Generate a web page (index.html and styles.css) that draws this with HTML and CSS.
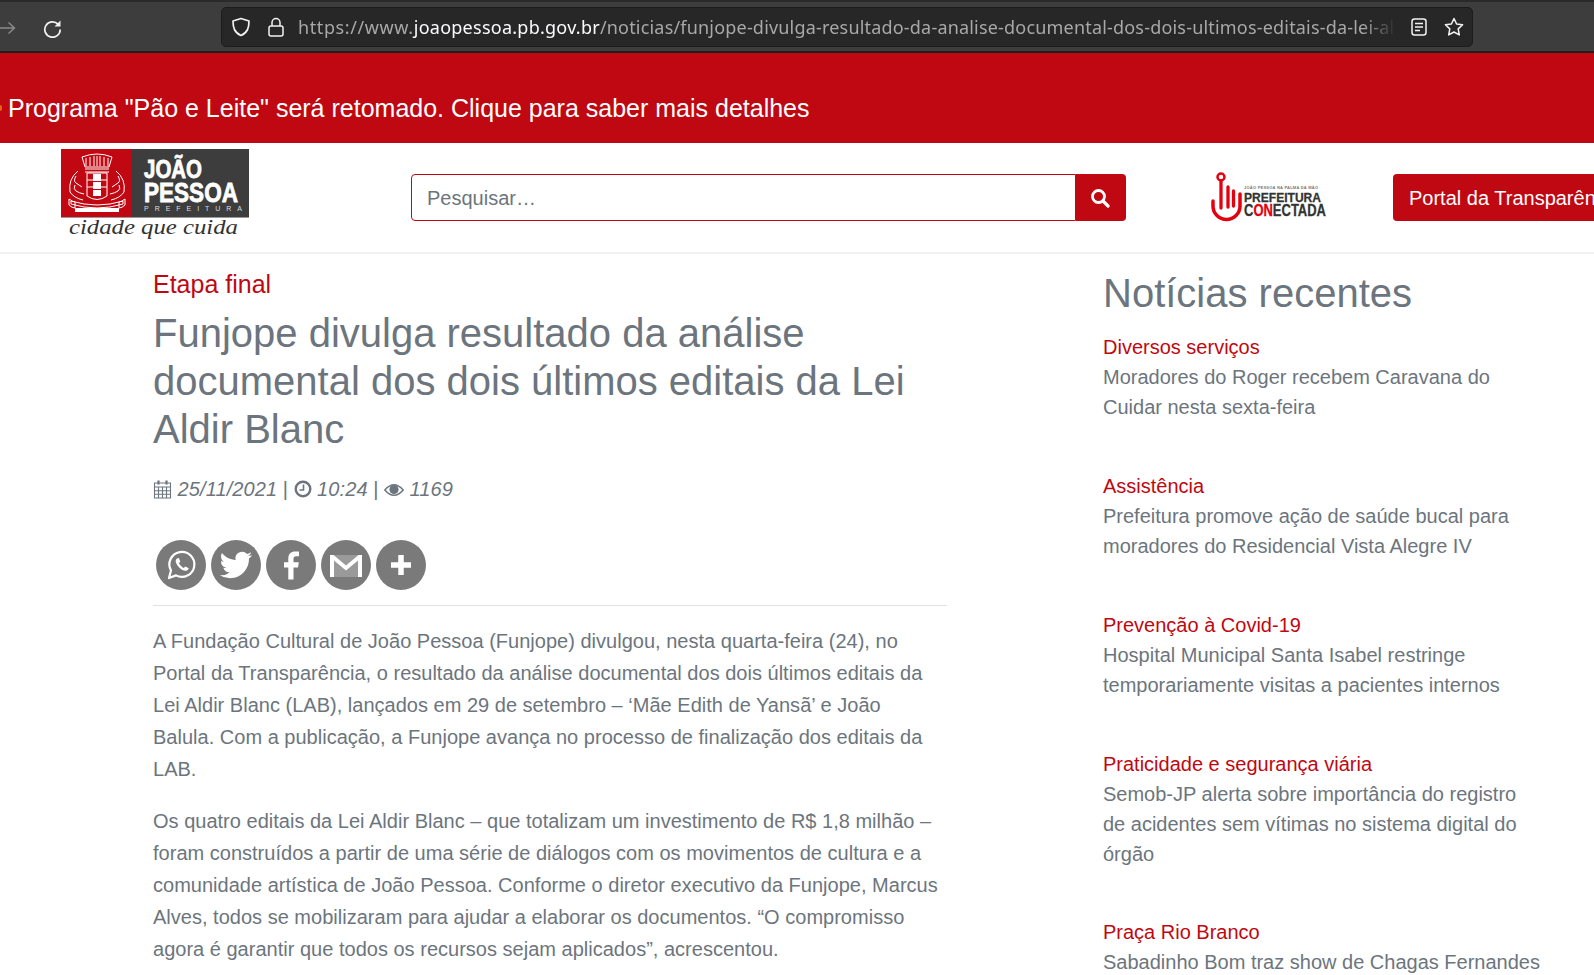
FILE: index.html
```html
<!DOCTYPE html>
<html lang="pt-BR">
<head>
<meta charset="utf-8">
<title>Funjope divulga resultado</title>
<link rel="stylesheet" href="styles.css">
</head>
<body>
<div class="toolbar">
  <svg class="tb-forward" width="16" height="16" viewBox="0 0 16 16"><path d="M-2 8h16M8.500 2.500 14.500 8l-6 5.500" fill="none" stroke="#8a8a8a" stroke-width="1.400"/></svg>
  <svg class="tb-reload" width="20" height="20" viewBox="0 0 20 20"><path d="M18.200 11.500a7.700 7.700 0 1 1-2.200-5.400" fill="none" stroke="#f2f2f2" stroke-width="1.700"/><path d="M18.500 2.500v6h-6z" fill="#f2f2f2"/></svg>
  <div class="urlbar">
    <svg class="ub-shield" width="20" height="20" viewBox="0 0 20 20"><path d="M10 1.500 18 4c0 7-1.500 11.500-8 14.500C3.500 15.500 2 11 2 4z" fill="none" stroke="#f2f2f2" stroke-width="1.700" stroke-linejoin="round"/></svg>
    <svg class="ub-lock" width="16" height="20" viewBox="0 0 16 20"><rect x="1" y="9" width="14" height="10" rx="2" fill="none" stroke="#f2f2f2" stroke-width="1.500"/><path d="M4 9V5.500a4 4 0 0 1 8 0V9" fill="none" stroke="#f2f2f2" stroke-width="1.500"/></svg>
    <div class="url"><span class="dim scheme">https://www.</span><span class="host">joaopessoa.pb.gov.br</span><span class="dim path">/noticias/funjope-divulga-resultado-da-analise-documental-dos-dois-ultimos-editais-da-lei-aldir-blanc</span></div>
    <svg class="ub-reader" width="16" height="18" viewBox="0 0 16 18"><rect x="1" y="1" width="14" height="16" rx="2.500" fill="none" stroke="#f2f2f2" stroke-width="1.500"/><path d="M4 5.500h8M4 9h8M4 12.500h5" stroke="#f2f2f2" stroke-width="1.500"/></svg>
    <svg class="ub-star" width="20" height="20" viewBox="0 0 20 20"><path d="m10 1.500 2.600 5.500 6 .8-4.400 4.100 1.100 6L10 15l-5.300 2.900 1.100-6L1.400 7.800l6-.8z" fill="none" stroke="#f2f2f2" stroke-width="1.500" stroke-linejoin="round"/></svg>
  </div>
</div>

<div class="alert"><i class="alert-dot"></i><span class="alert-text">Programa "Pão e Leite" será retomado. Clique para saber mais detalhes</span></div>

<header class="site-header">
  <svg class="logo" width="188" height="96" viewBox="0 0 188 96">
    <rect width="71" height="68" fill="#c10812"/>
    <rect x="71" width="117" height="68" fill="#3d3d3d"/>
    <rect y="68" width="188" height="1" fill="#999"/>
    <g fill="none" stroke="#fff" stroke-width="1">
      <path d="M21 8q15-6 30 0l-3 10H24z"/>
      <path d="M25 9v8M29 8v9M33 7v10M36 7v10M39 7v10M43 8v9M47 9v8"/>
      <path d="M24 20h24M24 23h24"/>
      <path d="M26 24h20v23q-10 7-20 0z"/>
      <path d="M26 31h6M26 38h6M40 31h6M40 38h6"/>
      <path d="M17 22q-10 8-8 21 4 6 13 8M55 22q10 8 8 21-4 6-13 8"/>
      <path d="M15 27q-3 5 0 7t6 4M14 36q-2 4 1 6t8 3M57 27q3 5 0 7t-6 4M58 36q2 4-1 6t-8 3"/>
      <path d="M8 50q4 3 6 3v6q-3 0-6-3zM64 50q-4 3-6 3v6q3 0 6-3z"/>
      <path d="M10 52q26 8 52 0v3q-26 8-52 0z"/>
    </g>
    <g fill="#fff">
      <rect x="32" y="25" width="8" height="7"/>
      <rect x="32" y="33" width="8" height="7"/>
      <rect x="32" y="41" width="8" height="6"/>
      <rect x="14" y="59" width="44" height="4"/>
    </g>
    <text class="logo-joao" x="83" y="29" textLength="58" lengthAdjust="spacingAndGlyphs">JOÃO</text>
    <text class="logo-pessoa" x="83" y="53" textLength="94" lengthAdjust="spacingAndGlyphs">PESSOA</text>
    <text class="logo-pref" x="83" y="62" textLength="98">PREFEITURA</text>
    <text class="logo-motto" x="8" y="85" textLength="169" lengthAdjust="spacingAndGlyphs">cidade que cuida</text>
  </svg>
  <form class="search">
    <div class="search-input">Pesquisar…</div>
    <div class="search-btn"><svg width="20" height="20" viewBox="0 0 20 20"><circle cx="8.500" cy="8.500" r="6" fill="none" stroke="#fff" stroke-width="2.800"/><path d="m13 13 5 5" stroke="#fff" stroke-width="3.200" stroke-linecap="round"/></svg></div>
  </form>
  <svg class="conectada" width="118" height="52" viewBox="0 0 118 52">
    <g fill="none" stroke="#e3000f" stroke-linecap="round">
      <circle cx="11" cy="5" r="3.500" stroke-width="2.500"/>
      <path d="M11 9v27M18 15v20M23.500 19v15" stroke-width="3.300"/>
      <path d="M3 29v5a13.500 13.500 0 0 0 27 0V22" stroke-width="3.500"/>
    </g>
    <text class="c-small" x="34" y="17" textLength="74">JOÃO PESSOA NA PALMA DA MÃO</text>
    <text class="c-pref" x="34" y="30" textLength="77" lengthAdjust="spacingAndGlyphs">PREFEITURA</text>
    <text class="c-con" x="34" y="44" textLength="82" lengthAdjust="spacingAndGlyphs"><tspan class="c-dark">C</tspan><tspan class="c-red">ON</tspan><tspan class="c-dark">ECTADA</tspan></text>
  </svg>
  <a class="portal">Portal da Transparência</a>
</header>

<main class="layout">
  <article class="article">
    <div class="kicker">Etapa final</div>
    <h1 class="headline">Funjope divulga resultado da análise documental dos dois últimos editais da Lei Aldir Blanc</h1>
    <div class="meta"><svg class="ico-cal" width="19" height="20" viewBox="0 0 18 20"><path d="M1 4h16v15H1zM1 8h16M1 11.700h16M1 15.300h16M5 8v11M9 8v11M13 8v11" fill="none" stroke="#6c757d" stroke-width="1.100"/><path d="M5 1.500v4M13 1.500v4" stroke="#6c757d" stroke-width="2.200"/></svg> <em>25/11/2021</em> | <svg class="ico-clock" width="18" height="18" viewBox="0 0 18 18"><circle cx="9" cy="9" r="7.300" fill="none" stroke="#6c757d" stroke-width="2.400"/><path d="M9.500 4.500V10H5.500" fill="none" stroke="#6c757d" stroke-width="1.600"/></svg> <em>10:24</em> | <svg class="ico-eye" width="20" height="14" viewBox="0 0 20 14"><path d="M.8 7Q10-3.500 19.200 7 10 17.500.8 7z" fill="none" stroke="#6c757d" stroke-width="1.500"/><circle cx="10" cy="6.500" r="4.600" fill="#6c757d"/></svg> <em>1169</em></div>
    <div class="share">
      <span class="share-btn"><svg width="50" height="50" viewBox="0 0 50 50"><path d="M13 38l2-7.500a12.500 12.500 0 1 1 5 4.900z" fill="none" stroke="#fff" stroke-width="2.200" stroke-linejoin="round"/><path d="M21 18.500c-2 1.500-1.700 4 .5 7s5 5 7.500 5.300c2 .2 3.500-1 3.700-2.600l-3.400-1.800-1.500 1.500c-1.700-.6-4-2.800-4.800-4.700l1.300-1.600-1.500-3.500z" fill="#fff"/></svg></span>
      <span class="share-btn"><svg width="50" height="50" viewBox="0 0 24 24"><path transform="translate(4.200 4.200) scale(.65)" d="M23.950 4.570a10 10 0 0 1-2.820.77 4.960 4.960 0 0 0 2.160-2.720c-.95.550-2 .96-3.130 1.190a4.920 4.920 0 0 0-8.380 4.480C7.690 8.100 4.070 6.130 1.640 3.160A4.820 4.820 0 0 0 .96 5.640c0 1.700.87 3.210 2.190 4.100a4.900 4.900 0 0 1-2.230-.62v.06a4.920 4.920 0 0 0 3.950 4.830 5 5 0 0 1-2.210.08 4.940 4.940 0 0 0 4.600 3.420A9.870 9.870 0 0 1 0 19.540a14 14 0 0 0 7.560 2.210c9.050 0 14-7.500 14-13.980 0-.21 0-.42-.02-.63a9.940 9.940 0 0 0 2.410-2.570z" fill="#fff"/></svg></span>
      <span class="share-btn"><svg width="50" height="50" viewBox="0 0 50 50"><path d="M27.500 39.500V27.500h4.500l.8-5.200h-5.300V19c0-1.600.6-2.700 2.800-2.700h2.700v-4.700c-.6-.1-2-.2-3.900-.2-4.100 0-6.800 2.400-6.800 7v3.900H18v5.200h4.300v12z" fill="#fff"/></svg></span>
      <span class="share-btn"><svg width="50" height="50" viewBox="0 0 50 50"><rect x="9" y="15" width="32" height="22" fill="#9a9a9a"/><path d="M9 15h3.500L25 25.500 37.500 15H41v22h-4V20.500L25 30.500 13 20.500V37H9z" fill="#fff"/></svg></span>
      <span class="share-btn"><svg width="50" height="50" viewBox="0 0 50 50"><path d="M25 15v20M15 25h20" stroke="#fff" stroke-width="5.500"/></svg></span>
    </div>
    <hr class="rule">
    <p>A Fundação Cultural de João Pessoa (Funjope) divulgou, nesta quarta-feira (24), no Portal da Transparência, o resultado da análise documental dos dois últimos editais da Lei Aldir Blanc (LAB), lançados em 29 de setembro – ‘Mãe Edith de Yansã’ e João Balula. Com a publicação, a Funjope avança no processo de finalização dos editais da LAB.</p>
    <p>Os quatro editais da Lei Aldir Blanc – que totalizam um investimento de R$ 1,8 milhão – foram construídos a partir de uma série de diálogos com os movimentos de cultura e a comunidade artística de João Pessoa. Conforme o diretor executivo da Funjope, Marcus Alves, todos se mobilizaram para ajudar a elaborar os documentos. “O compromisso agora é garantir que todos os recursos sejam aplicados”, acrescentou.</p>
  </article>
  <aside class="sidebar">
    <h2 class="side-title">Notícias recentes</h2>
    <div class="news"><a class="news-cat">Diversos serviços</a><div>Moradores do Roger recebem Caravana do Cuidar nesta sexta-feira</div></div>
    <div class="news"><a class="news-cat">Assistência</a><div>Prefeitura promove ação de saúde bucal para moradores do Residencial Vista Alegre IV</div></div>
    <div class="news"><a class="news-cat">Prevenção à Covid-19</a><div>Hospital Municipal Santa Isabel restringe temporariamente visitas a pacientes internos</div></div>
    <div class="news"><a class="news-cat">Praticidade e segurança viária</a><div>Semob-JP alerta sobre importância do registro de acidentes sem vítimas no sistema digital do órgão</div></div>
    <div class="news news-last"><a class="news-cat">Praça Rio Branco</a><div>Sabadinho Bom traz show de Chagas Fernandes</div></div>
  </aside>
</main>
</body>
</html>
```
FILE: styles.css
```css
* { box-sizing: border-box; }
html, body { margin: 0; height: 975px; overflow: hidden; }
body { font-family: "Liberation Sans", Arial, sans-serif; color: #6c757d; font-size: 20px; background: #fff; }

.toolbar { height: 53px; background: #3d3d3d; border-top: 2px solid #2a2a2a; border-bottom: 2px solid #1f1f1f; display: flex; align-items: center; }
.tb-forward { margin-top: 2px; }
.tb-reload { margin: 2px 0 0 26px; }
.urlbar { margin-left: 159px; width: 1252px; height: 40px; background: #272727; border: 1px solid #1c1c1c; border-radius: 5px; display: flex; align-items: center; padding-left: 9px; }
.ub-lock { margin-left: 17px; }
.url { margin-left: 14px; width: 1098px; overflow: hidden; white-space: nowrap; font-family: "Noto Sans", sans-serif; font-size: 18px; -webkit-mask-image: linear-gradient(to right, #000 97%, transparent); mask-image: linear-gradient(to right, #000 97%, transparent); }
.dim { color: #a8a8a8; }
.scheme { letter-spacing: .6px; }
.host { color: #fbfbfe; letter-spacing: .25px; }
.path { letter-spacing: .19px; }
.ub-reader { margin-left: 15px; }
.ub-star { margin-left: 17px; }

.alert { height: 90px; background: #bf0811; color: #fff; font-size: 25px; padding-top: 19px; line-height: 28px; white-space: nowrap; display: flex; align-items: center; }
.alert-dot { width: 2px; height: 6px; background: #e8641b; margin-right: 6px; border-radius: 0 3px 3px 0; flex: none; }

.site-header { height: 111px; border-bottom: 2px solid #f1f1f1; display: flex; align-items: flex-start; padding: 6px 0 0 61px; white-space: nowrap; }
.logo { flex: none; overflow: visible; }
.logo-joao { font: 700 25px "Liberation Sans", sans-serif; fill: #fff; stroke: #fff; stroke-width: .8px; }
.logo-pessoa { font: 700 27px "Liberation Sans", sans-serif; fill: #fff; stroke: #fff; stroke-width: .8px; }
.logo-pref { font: 400 7px "Liberation Sans", sans-serif; fill: #ddd; }
.logo-motto { font: italic 400 22px "Liberation Serif", serif; fill: #333; }

.search { display: flex; flex: none; width: 715px; height: 47px; margin: 25px 0 0 162px; }
.search-input { flex: 1; border: 1px solid #bf0811; border-radius: 4px 0 0 4px; padding: 0 15px; line-height: 47px; color: #6c757d; }
.search-btn { width: 50px; background: #bf0811; border-radius: 0 4px 4px 0; display: flex; align-items: center; justify-content: center; padding-right: 2px; }

.conectada { flex: none; margin: 23px 0 0 84px; overflow: visible; }
.c-small { font: 700 4px "Liberation Sans", sans-serif; fill: #777; }
.c-pref { font: 700 13px "Liberation Sans", sans-serif; fill: #333; stroke: #333; stroke-width: .3px; }
.c-con { font: 700 16.500px "Liberation Sans", sans-serif; stroke-width: .3px; }
.c-dark { fill: #333; stroke: #333; }
.c-red { fill: #e3000f; stroke: #e3000f; }

.portal { flex: none; margin: 25px 0 0 65px; height: 47px; line-height: 49px; background: #bf0811; color: #fff; border-radius: 4px; padding: 0 16px; }

.layout { display: flex; padding-left: 153px; }
.article { width: 794px; flex: none; }
.kicker { color: #bf0811; font-size: 25px; line-height: 30px; margin-top: 15px; }
.headline { font-size: 40px; font-weight: 400; line-height: 48px; margin: 10px 0 0; }
.meta { margin-top: 21px; line-height: 30px; height: 30px; white-space: nowrap; }
.meta em { letter-spacing: .1px; }
.meta svg { vertical-align: -2px; }
.meta .ico-cal { vertical-align: -3px; }
.meta .ico-eye { vertical-align: -1px; }
.share { display: flex; gap: 5px; margin: 36px 0 0 3px; }
.share-btn { width: 50px; height: 50px; border-radius: 50%; background: #7a7a7a; display: block; }
.share-btn svg { display: block; }
.rule { border: 0; border-top: 1px solid #e2e2e2; margin: 15px 0 19px; }
p { line-height: 32px; margin: 0 0 20px; padding-right: 8px; letter-spacing: .012px; }

.sidebar { width: 439px; flex: none; margin-left: 156px; }
.side-title { font-size: 40px; font-weight: 400; line-height: 48px; margin: 15px 0 15px; }
.news { line-height: 30px; margin-bottom: 49px; }
.news-last { margin-top: -1px; }
.news-cat { color: #bf0811; display: block; }
```
